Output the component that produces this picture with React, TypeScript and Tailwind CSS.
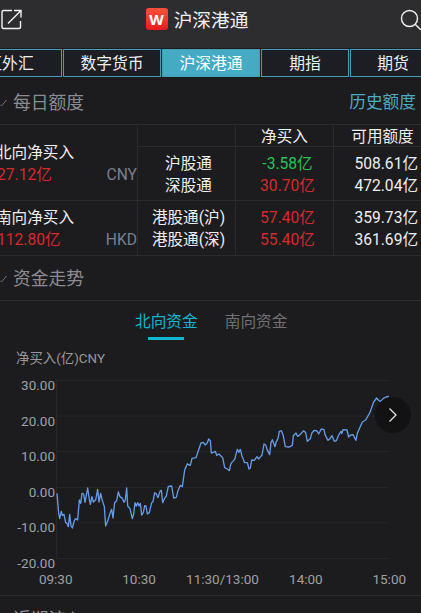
type Quota = { name: string; net: string; left: string; down?: boolean };

const flows: {
  title: string;
  total: string;
  currency: string;
  rows: Quota[];
}[] = [
  {
    title: "北向净买入",
    total: "27.12亿",
    currency: "CNY",
    rows: [
      { name: "沪股通", net: "-3.58亿", left: "508.61亿", down: true },
      { name: "深股通", net: "30.70亿", left: "472.04亿" },
    ],
  },
  {
    title: "南向净买入",
    total: "112.80亿",
    currency: "HKD",
    rows: [
      { name: "港股通(沪)", net: "57.40亿", left: "359.73亿" },
      { name: "港股通(深)", net: "55.40亿", left: "361.69亿" },
    ],
  },
];

const yTicks = ["30.00", "20.00", "10.00", "0.00", "-10.00", "-20.00"];
const xTicks = ["09:30", "10:30", "11:30/13:00", "14:00", "15:00"];

// 3 units per pixel
const trend =
  "3,340 8,400 11,416 16,394 19,406 24,403 29,428 33,430 37,440 41,403 45,438 49,444 55,422 59,416 65,420 70,360 74,370 78,340 83,342 87,367 91,345 95,324 99,352 103,373 108,350 112,366 119,360 125,328 129,366 134,340 138,358 145,380 149,438 156,420 162,400 167,388 171,414 176,368 182,362 187,336 192,350 199,355 204,367 208,360 212,324 215,378 222,386 229,416 233,402 237,368 241,378 245,368 249,378 " +
  "253,370 257,405 262,398 266,377 270,378 274,402 280,398 287,368 291,365 296,338 301,342 306,353 312,334 316,331 320,368 326,355 331,348 337,319 347,318 353,354 361,352 366,332 373,316 379,320 386,270 394,251 399,255 403,256 408,235 420,233 426,215 435,189 442,187 448,195 454,188 458,177 463,182 466,219 472,217 478,214 482,226 489,222 500,233 506,263 514,267 520,272 525,250 536,238 544,208 549,217 553,208 558,228 566,248 574,248 579,267 583,264 587,240 595,241 603,230 608,237 " +
  "612,232 618,225 624,192 629,195 633,208 641,224 645,188 649,179 657,200 661,185 666,176 670,154 676,152 681,164 688,200 700,201 709,196 712,167 720,159 725,169 731,165 743,152 749,158 754,184 763,176 768,158 775,151 783,153 788,162 796,147 804,149 807,164 816,181 822,176 828,167 835,184 841,182 849,163 855,154 857,161 861,149 873,150 878,171 884,165 891,164 900,181 904,160 919,126 929,120 942,97 953,66 962,54 967,60 974,65 982,55 990,51 999,49";

function Header() {
  return (
    <header className="flex h-12 items-center justify-between bg-[#2d2d2f] pb-2 text-[#f2f2f2]">
      <svg className="h-6 w-6" viewBox="0 0 24 24" fill="none" stroke="currentColor" strokeWidth="1.4">
        <path d="M12 2.5H3.5A1.5 1.5 0 0 0 2 4v15a1.5 1.5 0 0 0 1.5 1.5H19a1.5 1.5 0 0 0 1.5-1.5v-6" />
        <path d="M8 15.500 20.500 3M14 2.500h7v7" />
      </svg>
      <div className="flex items-center gap-[6px] pr-[30px]">
        <span className="mt-[-2px] flex h-[22px] w-[22px] items-center justify-center rounded-[3px] bg-linear-to-b from-[#f8503a] to-[#e5191c] font-['Open_Sans'] text-[15px] font-bold text-white">
          W
        </span>
        <h1 className="pt-px text-[18.7px] leading-6">沪深港通</h1>
      </div>
      <svg className="h-6 w-[21px]" viewBox="0 0 21 24" fill="none" stroke="currentColor" strokeWidth="1.4">
        <circle cx="9.5" cy="10.5" r="8" />
        <path d="m15.200 16.200 5.500 5.500" />
      </svg>
    </header>
  );
}

function MarketTabs() {
  const tab =
    "flex h-7 shrink-0 items-center justify-center border border-[#479fb4] bg-[#1d1e24] pt-[2px] text-[15.8px] text-[#f0f0f0]";
  return (
    <nav className="mt-px flex h-7 gap-px overflow-hidden">
      <div className={`${tab} -ml-[40px] w-[102px] pr-[2px]`}>区外汇</div>
      <div className={`${tab} w-[98px]`}>数字货币</div>
      <div className={`${tab} w-[98px] !bg-[#45aac3] !text-white`}>沪深港通</div>
      <div className={`${tab} w-[88px]`}>期指</div>
      <div className={`${tab} w-[86px]`}>期货</div>
    </nav>
  );
}

function SectionTitle({ children }: { children: string }) {
  return (
    <h2 className="flex items-center text-[17.8px] leading-6 text-[#8c8c90]">
      <svg className="mr-[6px] h-2 w-[7px]" viewBox="0 0 7 8" fill="none" stroke="#6f6f73">
        <path d="M0 5.500 1.500 7 6.500 1" />
      </svg>
      {children}
    </h2>
  );
}

function QuotaTable() {
  return (
    <div className="grid grid-cols-[137px_98px_98px_88px] grid-rows-[21px_54px_55px] border-y border-[#2a2a2c] text-[15.6px] leading-[22px] text-[#efefef]">
      <div className="col-start-2 row-start-1 border-l border-[#2a2a2c]" />
      <div className="border-l border-[#2a2a2c] pt-px text-center">净买入</div>
      <div className="border-l border-[#2a2a2c] pt-px pl-[10px] text-center whitespace-nowrap">可用额度</div>
      {flows.map((f, i) => (
        <div key={f.title} className="contents">
          <div
            className={
              i === 0
                ? "col-start-1 row-span-2 row-start-1 pt-[17px]"
                : "border-t border-[#2a2a2c] pt-[6px]"
            }
          >
            <div className="-ml-1 whitespace-nowrap">{f.title}</div>
            <div className="-ml-[3px] flex justify-between">
              <span className="text-[#d6292e]">{f.total}</span>
              <span className="text-[#7b808c]">{f.currency}</span>
            </div>
          </div>
          <div className="border-t border-l border-[#2a2a2c] pt-[6px] pl-[4px] text-center whitespace-nowrap">
            {f.rows.map((r) => (
              <div key={r.name}>{r.name}</div>
            ))}
          </div>
          <div className="border-t border-l border-[#2a2a2c] pt-[6px] pl-[6px] text-center">
            {f.rows.map((r) => (
              <div key={r.name} className={r.down ? "text-[#23c552]" : "text-[#d6292e]"}>
                {r.net}
              </div>
            ))}
          </div>
          <div className="border-t border-l border-[#2a2a2c] pt-[6px] pr-[3px] text-right whitespace-nowrap">
            {f.rows.map((r) => (
              <div key={r.name}>{r.left}</div>
            ))}
          </div>
        </div>
      ))}
    </div>
  );
}

function TrendChart() {
  return (
    <div className="relative text-[13.5px] text-[#a0a0a3]">
      <div className="flex">
        <div className="flex w-14 flex-col">
          {yTicks.map((t) => (
            <div key={t} className="h-[35.5px] pt-px pr-px text-right leading-4">
              {t}
            </div>
          ))}
        </div>
        <svg className="mt-1 h-[180px] w-[333px] overflow-visible" viewBox="0 0 999 540" fill="none">
          <path
            d="M0 1.500H999M0 108.500H999M0 214.500H999M0 322.500H999M0 428.500H999M0 535.500H999M1.500 0V536"
            stroke="#262628"
            strokeWidth="3"
          />
          <polyline points={trend} stroke="#659ce4" strokeWidth="4" strokeLinejoin="round" />
        </svg>
      </div>
      <div className="-mt-[18px] flex">
        {xTicks.map((t) => (
          <div key={t} className="w-[83.4px] shrink-0 text-center leading-4 first:ml-[14px]">
            {t}
          </div>
        ))}
      </div>
      <button className="absolute top-[21px] left-[375px] flex h-9 w-9 items-center justify-center rounded-full bg-[#121212]">
        <svg className="h-[14px] w-2" viewBox="0 0 8 14" fill="none" stroke="#e6e6e6" strokeWidth="1.3">
          <path d="m.5.500 6.500 6.500L.5 13.500" />
        </svg>
      </button>
    </div>
  );
}

export default function App() {
  return (
    <main className="h-[613px] w-[421px] overflow-hidden bg-[#1c1c1e] font-[Roboto,'Noto_Sans_CJK_SC',sans-serif]">
      <Header />
      <MarketTabs />
      <div className="flex h-[47px] items-center justify-between pt-[5px] pr-[5px]">
        <SectionTitle>每日额度</SectionTitle>
        <span className="text-[16.7px] text-[#4fa9c0]">历史额度</span>
      </div>
      <QuotaTable />
      <div className="flex h-[45px] items-center border-b border-[#2f2f31] pt-px">
        <SectionTitle>资金走势</SectionTitle>
      </div>
      <div className="flex h-10 gap-[27px] pl-[135px] text-[15.7px] leading-5">
        <div className="flex flex-col items-center pt-[11px] text-[#10b7d2]">
          北向资金
          <span className="mt-[5px] h-[3px] w-9 bg-[#10b7d2]" />
        </div>
        <div className="pt-[11px] text-[#707074]">南向资金</div>
      </div>
      <div className="h-[35px] pt-[10px] pl-4 text-[13.4px] leading-4 text-[#98989b]">净买入(亿)CNY</div>
      <TrendChart />
      <div className="mt-2 border-t border-[#29292b] pt-[12px]">
        <SectionTitle>近期流入</SectionTitle>
      </div>
    </main>
  );
}
